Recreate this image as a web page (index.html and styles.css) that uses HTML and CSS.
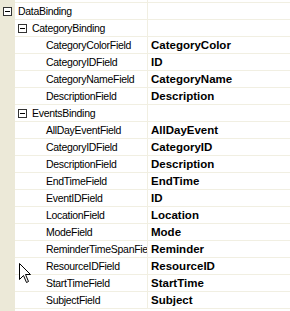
FILE: index.html
```html
<!DOCTYPE html>
<html lang="en">
<head>
    <meta charset="UTF-8">
    <title>DataBinding</title>
    <link rel="stylesheet" href="styles.css">
</head>
<body>
<div class="grid">
    <div class="row spacer"><div class="gutter"></div><div class="name"></div><div class="value"></div></div>

    <div class="row">
        <div class="gutter"><span class="toggle"></span></div>
        <div class="name lvl0">DataBinding</div>
        <div class="value"></div>
    </div>
    <div class="row">
        <div class="gutter"></div>
        <div class="name lvl1"><span class="toggle"></span>CategoryBinding</div>
        <div class="value"></div>
    </div>
    <div class="row"><div class="gutter"></div><div class="name lvl2">CategoryColorField</div><div class="value">CategoryColor</div></div>
    <div class="row"><div class="gutter"></div><div class="name lvl2">CategoryIDField</div><div class="value">ID</div></div>
    <div class="row"><div class="gutter"></div><div class="name lvl2">CategoryNameField</div><div class="value">CategoryName</div></div>
    <div class="row"><div class="gutter"></div><div class="name lvl2">DescriptionField</div><div class="value">Description</div></div>
    <div class="row">
        <div class="gutter"></div>
        <div class="name lvl1"><span class="toggle"></span>EventsBinding</div>
        <div class="value"></div>
    </div>
    <div class="row"><div class="gutter"></div><div class="name lvl2">AllDayEventField</div><div class="value">AllDayEvent</div></div>
    <div class="row"><div class="gutter"></div><div class="name lvl2">CategoryIDField</div><div class="value">CategoryID</div></div>
    <div class="row"><div class="gutter"></div><div class="name lvl2">DescriptionField</div><div class="value">Description</div></div>
    <div class="row"><div class="gutter"></div><div class="name lvl2">EndTimeField</div><div class="value">EndTime</div></div>
    <div class="row"><div class="gutter"></div><div class="name lvl2">EventIDField</div><div class="value">ID</div></div>
    <div class="row"><div class="gutter"></div><div class="name lvl2">LocationField</div><div class="value">Location</div></div>
    <div class="row"><div class="gutter"></div><div class="name lvl2">ModeField</div><div class="value">Mode</div></div>
    <div class="row"><div class="gutter"></div><div class="name lvl2"><span class="clip">ReminderTimeSpanField</span></div><div class="value">Reminder</div></div>
    <div class="row"><div class="gutter"></div><div class="name lvl2">ResourceIDField</div><div class="value">ResourceID</div></div>
    <div class="row"><div class="gutter"></div><div class="name lvl2">StartTimeField</div><div class="value">StartTime</div></div>
    <div class="row"><div class="gutter"></div><div class="name lvl2">SubjectField</div><div class="value">Subject</div></div>
</div>

<svg class="cursor" width="14" height="22" viewBox="0 0 14 22">
    <path d="M0.5 0.5 L0.5 16.5 L4.5 12.5 L7.5 19.5 L9.5 18.5 L6.5 11.5 L11.5 11.5 Z" fill="#fff" stroke="#000" stroke-width="1"/>
</svg>
</body>
</html>
```

FILE: styles.css
```css
body {
    margin: 0;
    height: 311px;
    overflow: hidden;
    font-family: "Liberation Sans", Arial, sans-serif;
    font-size: 10.5px;
    letter-spacing: -0.3px;
    color: #000;
    background: linear-gradient(to right, #ECE9D8 15px, #fff 15px);
}
.grid {
    width: 290px;
}
.row {
    display: flex;
    height: 17px;
}
.gutter {
    width: 15px;
    flex-shrink: 0;
    display: flex;
    align-items: center;
    justify-content: center;
}
.name {
    width: 133px;
    flex-shrink: 0;
    display: flex;
    align-items: center;
    box-sizing: border-box;
    border-bottom: 1px solid #F1EFE2;
    border-right: 1px solid #F1EFE2;
    white-space: nowrap;
    overflow: hidden;
}
.clip {
    overflow: hidden;
    max-width: 101px;
}
.value {
    flex: 1;
    display: flex;
    align-items: center;
    padding-left: 3px;
    border-bottom: 1px solid #F1EFE2;
    font-weight: bold;
    font-size: 11.5px;
    letter-spacing: 0;
    white-space: nowrap;
    overflow: hidden;
}
.spacer {
    height: 3px;
}
.lvl0 {
    padding-left: 3px;
}
.lvl1 {
    padding-left: 3px;
}
.lvl2 {
    padding-left: 31px;
}
.toggle {
    position: relative;
    width: 9px;
    height: 9px;
    box-sizing: border-box;
    border: 1px solid #333;
    background: #fff;
    flex-shrink: 0;
}
.lvl1 .toggle {
    margin-right: 5px;
}
.toggle::after {
    content: "";
    position: absolute;
    left: 1px;
    top: 3px;
    width: 5px;
    height: 1px;
    background: #000;
}
.cursor {
    position: absolute;
    left: 19px;
    top: 263px;
}
```
